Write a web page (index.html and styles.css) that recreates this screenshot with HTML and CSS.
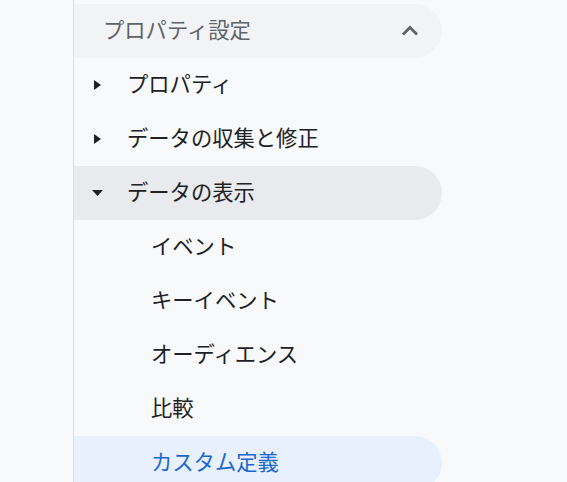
FILE: index.html
```html
<!DOCTYPE html>
<html lang="ja">
<head>
<meta charset="utf-8">
<link rel="stylesheet" href="styles.css">
</head>
<body>
<nav class="sidebar">
  <div class="row header">
    <span class="label">プロパティ設定</span>
    <svg class="chevron" width="18" height="11" viewBox="0 0 18 11"><polyline points="2,9.5 9,2.5 16,9.5" fill="none" stroke="#5f6368" stroke-width="2.8"/></svg>
  </div>
  <div class="row item">
    <span class="arrow"><svg width="7" height="10" viewBox="0 0 7 10"><polygon points="0,0 7,5 0,10" fill="#202124"/></svg></span>
    <span class="label">プロパティ</span>
  </div>
  <div class="row item">
    <span class="arrow"><svg width="7" height="10" viewBox="0 0 7 10"><polygon points="0,0 7,5 0,10" fill="#202124"/></svg></span>
    <span class="label">データの収集と修正</span>
  </div>
  <div class="row item open">
    <span class="arrow"><svg width="11" height="6" viewBox="0 0 11 6"><polygon points="0,0 11,0 5.5,6" fill="#202124"/></svg></span>
    <span class="label">データの表示</span>
  </div>
  <div class="row sub"><span class="label">イベント</span></div>
  <div class="row sub"><span class="label">キーイベント</span></div>
  <div class="row sub"><span class="label">オーディエンス</span></div>
  <div class="row sub"><span class="label">比較</span></div>
  <div class="row sub active"><span class="label">カスタム定義</span></div>
</nav>
</body>
</html>
```

FILE: styles.css
```css
html, body {
  margin: 0;
  padding: 0;
  background: #f8f9fa;
  font-family: "Noto Sans CJK JP", "Noto Sans", sans-serif;
}

.sidebar {
  margin-left: 73px;
  border-left: 1px solid #dadce0;
  width: 369px;
  min-height: 100vh;
  padding-top: 4px;
  box-sizing: border-box;
  display: flex;
  flex-direction: column;
  overflow: hidden;
}

.row {
  flex: 0 0 auto;
  height: 54px;
  display: flex;
  align-items: center;
  border-radius: 0 27px 27px 0;
  font-size: 21.3px;
  color: #202124;
  white-space: nowrap;
}

.label {
  line-height: 1;
  margin-bottom: 4px;
}

.header {
  background: #f1f3f4;
  color: #5f6368;
  padding-left: 29px;
  padding-right: 23px;
  justify-content: space-between;
}

.chevron {
  display: block;
  margin-bottom: 2px;
}

.item {
  padding-left: 8px;
}

.arrow {
  width: 30px;
  display: flex;
  justify-content: center;
  align-items: center;
  margin-right: 15px;
}

.arrow svg {
  display: block;
}

.open {
  background: #e8eaed;
}

.sub {
  padding-left: 77px;
}

.active {
  background: #e8f0fe;
  color: #1967d2;
}
```
